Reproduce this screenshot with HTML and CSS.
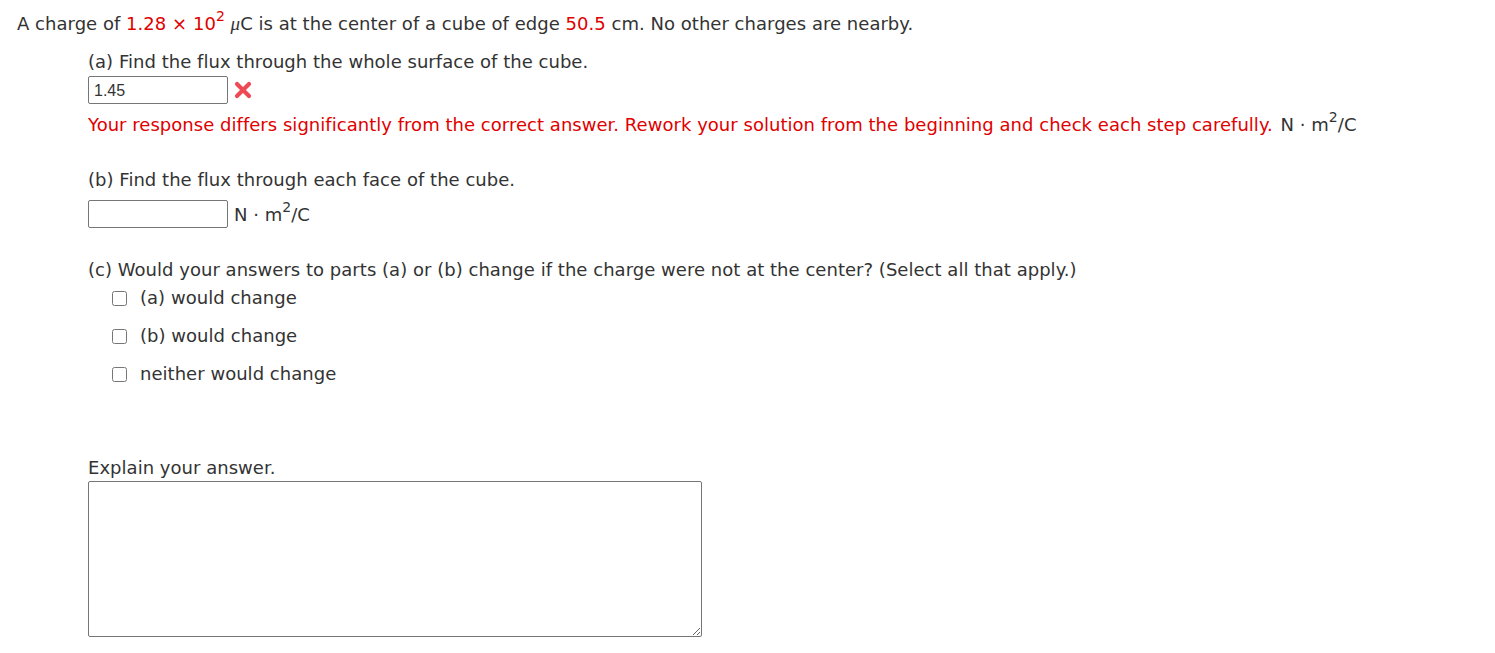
FILE: index.html
```html
<!DOCTYPE html>
<html>
<head>
<meta charset="utf-8">
<link rel="stylesheet" href="styles.css">
</head>
<body>
<div class="page">
  <p class="stem">A charge of <span class="red">1.28 &times; 10<sup>2</sup></span> <i class="mu">&mu;</i>C is at the center of a cube of edge <span class="red">50.5</span> cm. No other charges are nearby.</p>
  <div class="parts">
    <p class="part-a">(a) Find the flux through the whole surface of the cube.</p>
    <div class="answer-row">
      <input class="answer" type="text" value="1.45">
      <svg class="xmark" width="20" height="18" viewBox="0 0 20 18"><path d="M4 3 L16 15 M16 3 L4 15" stroke="#ee4a55" stroke-width="4.2" stroke-linecap="round"/></svg>
    </div>
    <p class="error">Your response differs significantly from the correct answer. Rework your solution from the beginning and check each step carefully. <span class="unit">N &middot; m<sup>2</sup>/C</span></p>
    <p class="part-b">(b) Find the flux through each face of the cube.</p>
    <div class="answer-row row-b">
      <input class="answer" type="text" value="">
      <span class="unit">N &middot; m<sup>2</sup>/C</span>
    </div>
    <p class="part-c">(c) Would your answers to parts (a) or (b) change if the charge were not at the center? (Select all that apply.)</p>
    <div class="choices">
      <label class="choice"><input type="checkbox"><span>(a) would change</span></label>
      <label class="choice"><input type="checkbox"><span>(b) would change</span></label>
      <label class="choice"><input type="checkbox"><span>neither would change</span></label>
    </div>
    <p class="explain">Explain your answer.</p>
    <textarea class="explain-box"></textarea>
  </div>
</div>
</body>
</html>
```
FILE: styles.css
```css
html, body {
  margin: 0;
  padding: 0;
  background: #fff;
}
body {
  font-family: "DejaVu Sans", Verdana, sans-serif;
  font-size: 18px;
  color: #333;
  letter-spacing: 0.03px;
}
.page {
  padding: 14px 17px 0 17px;
}
p {
  margin: 0;
  line-height: 20px;
  height: 20px;
  white-space: nowrap;
}
sup {
  font-size: 14px;
  line-height: 0;
  vertical-align: 9px;
}
.red {
  color: #e00000;
}
.mu {
  font-family: "Liberation Serif", serif;
  font-size: 19px;
}
.parts {
  margin-left: 71px;
  display: flex;
  flex-direction: column;
}
.part-a {
  margin-top: 18px;
}
.answer-row {
  margin-top: 4px;
  display: flex;
  align-items: center;
  height: 28px;
}
.answer {
  box-sizing: border-box;
  width: 140px;
  height: 28px;
  margin: 0;
  border: 1px solid #767676;
  border-radius: 2px;
  padding: 2px 5px 0 5px;
  font-family: "Liberation Sans", Arial, sans-serif;
  font-size: 16px;
  color: #333;
  outline: none;
}
.xmark {
  margin-left: 5px;
}
.error {
  margin-top: 11px;
  color: #e00000;
}
.unit {
  color: #333;
  margin-left: 2px;
}
.row-b .unit {
  margin-left: 6px;
}
.part-b {
  margin-top: 35px;
}
.row-b {
  margin-top: 10px;
}
.part-c {
  margin-top: 32px;
}
.choices {
  margin-top: 8px;
  margin-left: 23px;
  display: flex;
  flex-direction: column;
  gap: 18px;
}
.choice {
  display: flex;
  align-items: center;
  height: 20px;
  line-height: 20px;
}
.choice input {
  margin: 0 13px 0 1px;
  width: 15px;
  height: 15px;
}
.explain {
  margin-top: 74px;
}
.explain-box {
  box-sizing: border-box;
  margin-top: 3px;
  width: 614px;
  height: 156px;
  border: 1px solid #767676;
  border-radius: 2px;
  resize: both;
}
```
